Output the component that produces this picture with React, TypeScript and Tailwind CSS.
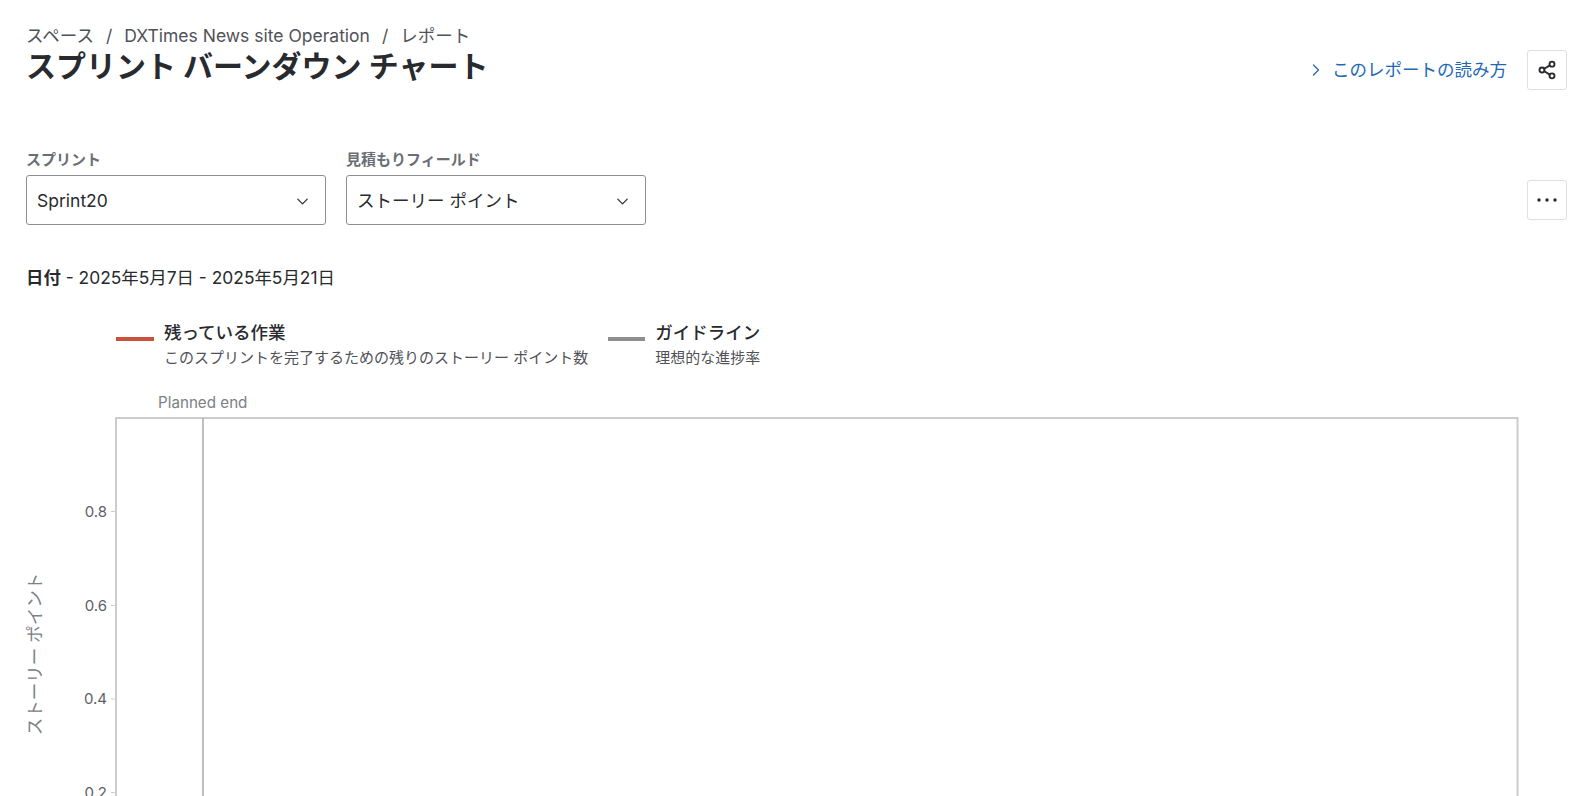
import React from 'react';
import { ChevronDown, ChevronRight, Share2 } from 'lucide-react';

const font = { fontFamily: 'Inter, "Noto Sans CJK JP", sans-serif' };

const ticks = [
  { label: '0.8', y: 95 },
  { label: '0.6', y: 189 },
  { label: '0.4', y: 282.5 },
  { label: '0.2', y: 376 },
];

function Select({ value }: { value: string }) {
  return (
    <div className="flex h-[50px] w-[300px] items-center justify-between rounded-[3px] border border-[#8c8f93] pl-[10px] pr-[13px] pt-[2px] text-[17.5px] text-[#292a2e]">
      <span>{value}</span>
      <ChevronDown size={19} strokeWidth={1.5} />
    </div>
  );
}

function LegendItem({ bar, title, sub }: { bar: string; title: string; sub: string }) {
  return (
    <div className="flex gap-[10px]">
      <div className={`mt-[16px] h-[4px] ${bar}`} />
      <div>
        <div className="text-[17.5px] leading-[24px] font-medium text-[#292a2e]">{title}</div>
        <div className="mt-[1px] text-[15px] leading-[24px] text-[#505258]">{sub}</div>
      </div>
    </div>
  );
}

export default function App() {
  return (
    <div className="h-[796px] overflow-hidden bg-white pl-[26px] pr-[23px] pt-[25px]" style={font}>
      <div className="flex items-start justify-between">
        <div>
          <div className="flex gap-3 text-[17.5px] leading-[21px] text-[#505258]">
            <span>スペース</span>
            <span>/</span>
            <span>DXTimes News site Operation</span>
            <span>/</span>
            <span>レポート</span>
          </div>
          <h1 className="text-[30px] leading-[40px] font-bold text-[#292a2e]">スプリント バーンダウン チャート</h1>
        </div>
        <div className="mt-[25px] flex items-center gap-5">
          <a className="flex items-center gap-[6px] text-[17.5px] text-[#1f68b5]">
            <ChevronRight size={20} strokeWidth={1.5} />
            このレポートの読み方
          </a>
          <button className="flex h-10 w-10 items-center justify-center rounded-[3px] border border-[#dcdfe4] text-[#292a2e]">
            <Share2 size={20} strokeWidth={2.25} />
          </button>
        </div>
      </div>

      <div className="mt-[60px] flex items-end justify-between">
        <div className="flex gap-5">
          <div>
            <div className="mb-[5px] text-[15px] leading-[20px] font-bold text-[#6b6e76]">スプリント</div>
            <Select value="Sprint20" />
          </div>
          <div>
            <div className="mb-[5px] text-[15px] leading-[20px] font-bold text-[#6b6e76]">見積もりフィールド</div>
            <Select value="ストーリー ポイント" />
          </div>
        </div>
        <button className="mb-[5px] flex h-10 w-10 items-center justify-center rounded-[3px] border border-[#dcdfe4] text-[#292a2e]">
          <svg width="22" height="6" viewBox="0 0 22 6" fill="currentColor">
            <circle cx="3" cy="3" r="1.7" />
            <circle cx="11" cy="3" r="1.7" />
            <circle cx="19" cy="3" r="1.7" />
          </svg>
        </button>
      </div>

      <div className="mt-[41px] text-[17.4px] leading-[24px] text-[#292a2e]">
        <span className="font-bold">日付</span> - 2025年5月7日 - 2025年5月21日
      </div>

      <div className="mt-[31px] ml-[90px] flex gap-5">
        <LegendItem bar="w-[38px] bg-[#c9503d]" title="残っている作業" sub="このスプリントを完了するための残りのストーリー ポイント数" />
        <LegendItem bar="w-[37px] bg-[#8f8f8f]" title="ガイドライン" sub="理想的な進捗率" />
      </div>

      <svg width="1541" height="420" className="mt-[19px] block overflow-visible" style={font}>
        <text x="132" y="19" fontSize="15.2" fill="#7d8086">Planned end</text>
        <rect x="90" y="29" width="1401.5" height="440" fill="none" stroke="#cccccc" strokeWidth="2" />
        <line x1="177" y1="29" x2="177" y2="420" stroke="#aaaaaa" strokeWidth="1.5" />
        {ticks.map((t) => (
          <g key={t.label}>
            <line x1="85" y1={t.y + 27.5} x2="90" y2={t.y + 27.5} stroke="#cccccc" />
            <text x="81" y={t.y + 32.5} fontSize="15" fill="#5e6066" textAnchor="end">{t.label}</text>
          </g>
        ))}
        <text x="0" y="0" fontSize="17.5" fill="#7d8086" textAnchor="middle" transform="translate(15 265) rotate(-90)">ストーリー ポイント</text>
      </svg>
    </div>
  );
}
